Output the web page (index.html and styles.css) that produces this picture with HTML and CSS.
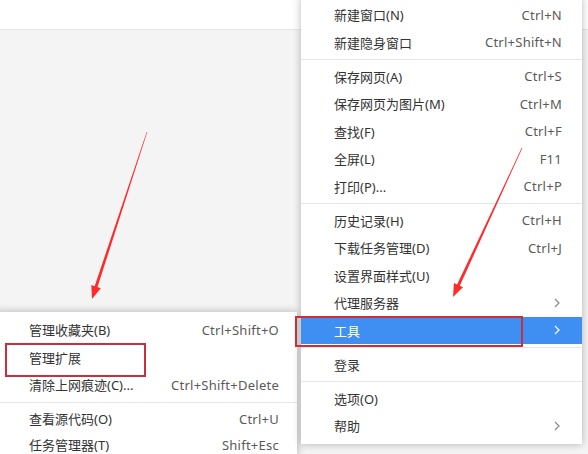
FILE: index.html
```html
<!DOCTYPE html>
<html lang="zh-CN">
<head>
    <meta charset="UTF-8">
    <title>菜单 - 工具</title>
    <link rel="stylesheet" href="styles.css">
</head>
<body>
    <div class="topbar"></div>
    <div class="page"></div>

    <!-- 工具 子菜单 -->
    <div class="menu sub">
        <div class="item"><span>管理收藏夹(B)</span><span class="key">Ctrl+Shift+O</span></div>
        <div class="item"><span>管理扩展</span></div>
        <div class="item"><span>清除上网痕迹(C)...</span><span class="key">Ctrl+Shift+Delete</span></div>
        <div class="sep"></div>
        <div class="item"><span>查看源代码(O)</span><span class="key">Ctrl+U</span></div>
        <div class="item"><span>任务管理器(T)</span><span class="key">Shift+Esc</span></div>
    </div>

    <!-- 主菜单 -->
    <div class="menu main">
        <div class="item"><span>新建窗口(N)</span><span class="key">Ctrl+N</span></div>
        <div class="item"><span>新建隐身窗口</span><span class="key">Ctrl+Shift+N</span></div>
        <div class="sep"></div>
        <div class="item"><span>保存网页(A)</span><span class="key">Ctrl+S</span></div>
        <div class="item"><span>保存网页为图片(M)</span><span class="key">Ctrl+M</span></div>
        <div class="item"><span>查找(F)</span><span class="key">Ctrl+F</span></div>
        <div class="item"><span>全屏(L)</span><span class="key">F11</span></div>
        <div class="item"><span>打印(P)...</span><span class="key">Ctrl+P</span></div>
        <div class="sep"></div>
        <div class="item"><span>历史记录(H)</span><span class="key">Ctrl+H</span></div>
        <div class="item"><span>下载任务管理(D)</span><span class="key">Ctrl+J</span></div>
        <div class="item"><span>设置界面样式(U)</span></div>
        <div class="item"><span>代理服务器</span>
            <svg class="chev" width="6" height="10" viewBox="0 0 6 10"><polyline points="1,1 5,5 1,9"/></svg>
        </div>
        <div class="item active"><span>工具</span>
            <svg class="chev" width="6" height="10" viewBox="0 0 6 10"><polyline points="1,1 5,5 1,9"/></svg>
        </div>
        <div class="sep"></div>
        <div class="item"><span>登录</span></div>
        <div class="sep"></div>
        <div class="item"><span>选项(O)</span></div>
        <div class="item"><span>帮助</span>
            <svg class="chev" width="6" height="10" viewBox="0 0 6 10"><polyline points="1,1 5,5 1,9"/></svg>
        </div>
    </div>

    <!-- 标注 -->
    <div class="mark mark-tools"></div>
    <div class="mark mark-ext"></div>
    <svg class="arrows" width="588" height="454" viewBox="0 0 588 454">
        <polygon points="147.28,132.09 97.5,287.1 100.82,288.21 92,299 91.32,285.09 94.65,286.2 146.72,131.91"/>
        <polygon points="522.27,148.13 459.82,285.83 462.99,287.3 453,297 453.92,283.1 457.1,284.57 521.73,147.87"/>
    </svg>
</body>
</html>
```

FILE: styles.css
```css
body {
    margin: 0;
    padding: 0;
    width: 588px;
    height: 454px;
    overflow: hidden;
    position: relative;
    background-color: #f4f4f4;
    font-family: "Noto Sans", "Noto Sans CJK SC", sans-serif;
    font-size: 13px;
    color: #333;
}
.topbar {
    height: 29px;
    background-color: #fff;
    border-bottom: 1px solid #e6e6e6;
}
.menu {
    position: absolute;
    background-color: #fff;
    box-shadow: 0 0 8px rgba(0, 0, 0, 0.28);
}
.menu.main {
    left: 301px;
    top: -3px;
    width: 281px;
    padding: 4px 0;
}
.menu.sub {
    left: -6px;
    top: 312px;
    width: 303px;
    height: 142px;
    padding-top: 4px;
    overflow: hidden;
}
.item {
    display: flex;
    align-items: center;
    justify-content: space-between;
    height: 27.5px;
    padding: 0 20px 0 33px;
    white-space: nowrap;
}
.sub .item {
    padding: 0 18px 0 35px;
}
.sub .item:last-child {
    height: 21.5px;
    align-items: flex-end;
}
.key {
    color: #5a5a5a;
    letter-spacing: 0.25px;
}
.item.active {
    background-color: #3f8ff2;
    color: #fff;
}
.chev {
    margin-right: 2px;
}
.chev polyline {
    fill: none;
    stroke: #8a8a8a;
    stroke-width: 1.2;
}
.item.active .chev polyline {
    stroke: #fff;
}
.sep {
    height: 1px;
    margin: 3px 0 2.5px;
    background-color: #e6e6e6;
}
.sub .sep {
    margin-left: 6px;
}
.mark {
    position: absolute;
    border: 2px solid #c8313c;
    box-sizing: border-box;
}
.mark-tools {
    left: 295px;
    top: 316px;
    width: 228px;
    height: 31px;
}
.mark-ext {
    left: 5px;
    top: 343px;
    width: 141px;
    height: 34px;
}
.arrows {
    position: absolute;
    left: 0;
    top: 0;
    pointer-events: none;
}
.arrows polygon {
    fill: #ff2b2b;
}
```
